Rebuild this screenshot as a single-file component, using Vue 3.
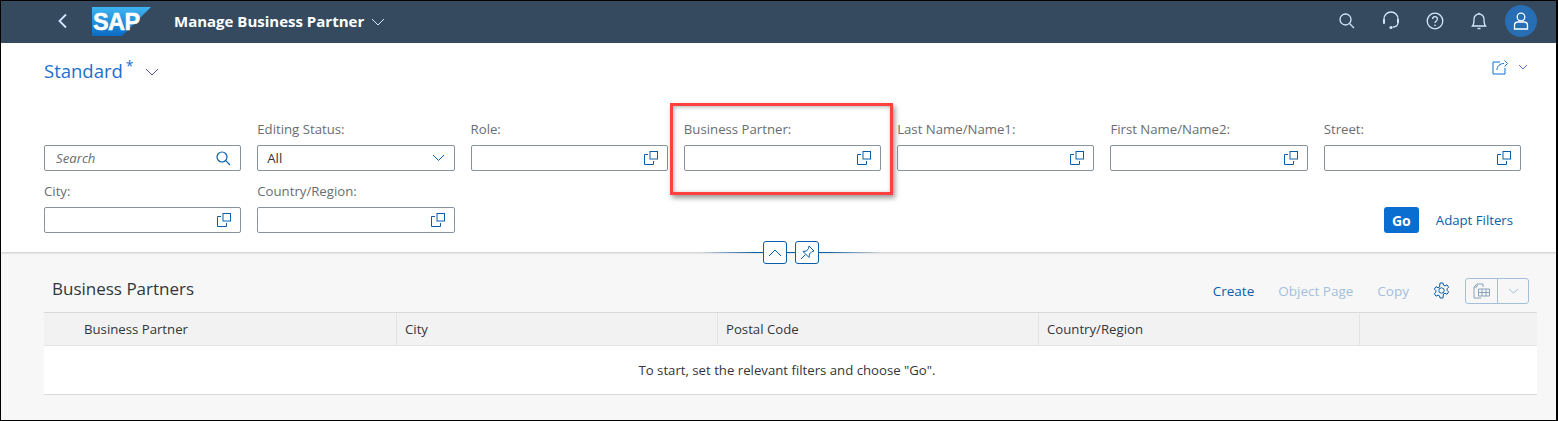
<script setup>
const filters = [
  { label: "Role:" },
  { label: "Business Partner:", marked: true },
  { label: "Last Name/Name1:" },
  { label: "First Name/Name2:" },
  { label: "Street:" },
  { label: "City:" },
  { label: "Country/Region:" },
];
const columns = ["Business Partner", "City", "Postal Code", "Country/Region", ""];
</script>

<template>
  <div class="page">
    <header class="shell">
      <div class="shell-left">
        <svg class="back" width="12" height="16" viewBox="0 0 12 16"><path d="M9 1.500 2.500 8 9 14.500" /></svg>
        <svg class="logo" width="60" height="30" viewBox="0 0 60 30">
          <defs>
            <linearGradient id="sapblue" x1="0" y1="0" x2="0" y2="1">
              <stop offset="0" stop-color="#3fb4f0" />
              <stop offset="1" stop-color="#0a6cc4" />
            </linearGradient>
          </defs>
          <polygon points="0,0 59,0 30,29 0,29" fill="url(#sapblue)" />
          <text x="1" y="23" class="logo-text">SAP</text>
        </svg>
        <span class="app-title">Manage Business Partner</span>
        <svg class="chev light" width="14" height="8" viewBox="0 0 14 8"><path d="M1 1l6 6 6-6" /></svg>
      </div>
      <div class="shell-right">
        <svg width="18" height="18" viewBox="0 0 18 18"><circle cx="7.500" cy="7.500" r="5.500" /><path d="M11.500 11.500 16 16" /></svg>
        <svg width="18" height="20" viewBox="0 0 18 20"><path d="M2 10V8a7 7 0 0 1 14 0v3c0 3-2 5-5 5" /><rect x="1" y="8" width="2" height="5" rx="1" class="fill" /><rect x="15" y="8" width="2" height="4" rx="1" class="fill" /><circle cx="9" cy="16.500" r="1.600" class="fill" /></svg>
        <svg width="18" height="18" viewBox="0 0 18 18"><circle cx="9" cy="9" r="7.800" /><path d="M6.600 7a2.400 2.400 0 1 1 3.700 2c-.9.6-1.300 1-1.300 2" /><circle cx="9" cy="13.400" r=".8" class="fill" /></svg>
        <svg width="18" height="18" viewBox="0 0 18 18"><path d="M2.500 14c1.300-1.500 1.500-3 1.500-7a5 5 0 0 1 10 0c0 4 .2 5.500 1.500 7z" /><path d="M7.500 16.500h3" /><path d="M9 2V.8" /></svg>
        <span class="avatar">
          <svg width="16" height="18" viewBox="0 0 16 18"><circle cx="8" cy="5" r="3.800" /><path d="M1.500 17v-3.500c0-2 1.500-3.500 3.500-3.500h6c2 0 3.500 1.500 3.500 3.500V17z" /></svg>
        </span>
      </div>
    </header>

    <section class="filterbar">
      <div class="variant-row">
        <span class="variant">Standard</span>
        <span class="star">*</span>
        <svg class="chev dark" width="14" height="8" viewBox="0 0 14 8"><path d="M1 1l6 6 6-6" /></svg>
        <span class="spacer"></span>
        <svg class="share" width="17" height="16" viewBox="0 0 17 16"><path d="M8 3H1v12h12V9" /><path d="M5 11c0-4 3-6.500 7-6.500M12.500 1.500l3 3-3 3" /></svg>
        <svg class="chev small" width="10" height="6" viewBox="0 0 10 6"><path d="M1 1l4 4 4-4" /></svg>
      </div>

      <div class="filter-grid">
        <div class="field">
          <label></label>
          <div class="input">
            <span class="placeholder">Search</span>
            <svg class="search" width="15" height="15" viewBox="0 0 15 15"><circle cx="6" cy="6" r="5" /><path d="M9.700 9.700 14 14" /></svg>
          </div>
        </div>
        <div class="field">
          <label>Editing Status:</label>
          <div class="input">
            <span class="value">All</span>
            <svg class="chev dark" width="13" height="8" viewBox="0 0 13 8"><path d="M1 1l5.500 5.500L12 1" /></svg>
          </div>
        </div>
        <div v-for="f in filters" :key="f.label" class="field" :class="{ marked: f.marked }">
          <label>{{ f.label }}</label>
          <div class="input">
            <span></span>
            <svg class="vh" width="14" height="14" viewBox="0 0 14 14"><path d="M4 3.500H.5v10h9V10" /><rect x="6" y=".5" width="7.500" height="7.500" /></svg>
          </div>
          <div v-if="f.marked" class="highlight"></div>
        </div>
        <div class="actions">
          <button class="go">Go</button>
          <span class="adapt">Adapt Filters</span>
        </div>
      </div>

      <div class="collapse">
        <span class="round-btn">
          <svg width="14" height="8" viewBox="0 0 14 8"><path d="M1 7l6-6 6 6" /></svg>
        </span>
        <span class="round-btn">
          <svg width="15" height="15" viewBox="0 0 15 15"><path d="M9 1l5 5-2 .5-2.500 2.500-.5 3.500L3 6.500l3.500-.5L8.500 3.500zM5.500 9.500 1 14" /></svg>
        </span>
      </div>
    </section>

    <section class="content">
      <div class="table-head">
        <h2>Business Partners</h2>
        <div class="toolbar">
          <span class="tool">Create</span>
          <span class="tool off">Object Page</span>
          <span class="tool off">Copy</span>
          <svg class="gear" width="17" height="17" viewBox="0 0 17 17"><circle cx="8.500" cy="8.500" r="2.700" /><path d="M7 1h3l.5 2.200 1.500.7 2-1.100 1.600 2.400-1.500 1.600v1.500l1.500 1.600-1.600 2.400-2-1.100-1.500.7L10 16H7l-.5-2.200-1.500-.7-2 1.100-1.600-2.400L2.900 10.200V8.700L1.400 7.100 3 4.700l2 1.100 1.500-.7z" /></svg>
          <div class="export">
            <span class="exp-main">
              <svg width="17" height="16" viewBox="0 0 17 16"><path d="M8 15H1V4l3-3h6v3" /><path d="M4 1v3H1" /><path d="M5.500 6h11v7h-11zM5.500 9.500h11M9 6v7M13 6v7" /></svg>
            </span>
            <span class="exp-arrow">
              <svg width="11" height="6" viewBox="0 0 11 6"><path d="M1 1l4.500 4L10 1" /></svg>
            </span>
          </div>
        </div>
      </div>
      <div class="table">
        <div class="thead">
          <div v-for="c in columns" :key="c" class="th">{{ c }}</div>
        </div>
        <div class="empty">To start, set the relevant filters and choose "Go".</div>
      </div>
    </section>
  </div>
</template>

<style>
html, body {
  margin: 0;
  background: #f7f7f7;
}
</style>

<style scoped>
.page {
  box-sizing: border-box;
  width: 1558px;
  height: 421px;
  border: 1px solid #000;
  border-right-width: 2px;
  display: flex;
  flex-direction: column;
  font-family: "Open Sans", "Noto Sans", sans-serif;
  font-size: 13.2px;
  color: #32363a;
  overflow: hidden;
  background: #f7f7f7;
}
svg {
  fill: none;
  stroke-width: 1;
  display: block;
  flex: none;
}

.shell {
  height: 42px;
  box-sizing: border-box;
  flex: none;
  background: #354a5f;
  display: flex;
  align-items: center;
  justify-content: space-between;
  padding: 0 19px 2px 0;
}
.shell-left {
  display: flex;
  align-items: center;
}
.back {
  margin-left: 56px;
  stroke: #d1e8ff;
  stroke-width: 1.800;
}
.logo {
  margin-left: 23px;
  margin-top: 2px;
}
.logo-text {
  fill: #fff;
  stroke: #fff;
  stroke-width: .5;
  font-family: "Liberation Sans", sans-serif;
  font-weight: 700;
  font-size: 23.500px;
  letter-spacing: -.6px;
}
.app-title {
  margin-left: 22px;
  color: #fff;
  font-weight: 700;
  font-size: 15px;
}
.chev.light {
  margin-left: 7px;
  margin-top: 2px;
  stroke: #d1e8ff;
}
.shell-right {
  display: flex;
  align-items: center;
  gap: 26px;
}
.shell-right > svg {
  stroke: #d1e8ff;
  stroke-width: 1.300;
}
.shell-right .fill {
  fill: #d1e8ff;
  stroke: none;
}
.avatar {
  width: 32px;
  height: 32px;
  margin-left: -9px;
  border-radius: 50%;
  background: #286eb4;
  display: flex;
  align-items: center;
  justify-content: center;
}
.avatar svg {
  stroke: #fff;
  stroke-width: 1.300;
}

.filterbar {
  position: relative;
  height: 209px;
  flex: none;
  background: #fff;
  box-shadow: 0 1px 2px rgba(0, 0, 0, .2);
  padding: 0 35px 0 43px;
  box-sizing: border-box;
  z-index: 1;
}
.variant-row {
  display: flex;
  align-items: center;
  height: 54px;
}
.variant {
  font-size: 18.500px;
  color: #1a6fd0;
}
.star {
  font-size: 14px;
  line-height: 1;
  color: #1a6fd0;
  margin: -8px 0 0 3px;
}
.chev.dark {
  stroke: #0a5ea8;
}
.variant-row .chev.dark {
  margin-left: 11px;
  margin-top: 4px;
  stroke: #5b4f9e;
}
.spacer {
  flex: 1;
}
.share {
  stroke: #0a6ed1;
  margin-top: -7px;
}
.chev.small {
  stroke: #5b6fc0;
  margin: -7px -7px 0 9px;
}
.filter-grid {
  display: grid;
  grid-template-columns: repeat(7, 1fr);
  column-gap: 16px;
  row-gap: 7px;
  margin-top: 19px;
}
.field {
  position: relative;
  min-width: 0;
}
.field label {
  display: block;
  height: 29px;
  line-height: 26px;
  color: #6a6d70;
}
.input {
  box-sizing: border-box;
  height: 26px;
  border: 1px solid #89919a;
  border-radius: 2px;
  display: flex;
  align-items: center;
  justify-content: space-between;
  padding: 0 9px 0 10px;
}
.placeholder {
  font-style: italic;
  color: #6a6d70;
  margin-left: 1px;
}
.value {
  color: #32363a;
  margin-left: -1px;
}
.search {
  stroke: #0a5ea8;
  stroke-width: 1.200;
}
.vh {
  stroke: #0a5ea8;
}
.highlight {
  position: absolute;
  left: -14px;
  right: -12px;
  top: -13px;
  bottom: -24px;
  border: 3px solid #ff4040;
  box-shadow: 2px 3px 5px rgba(0, 0, 0, .4), inset 1px 1px 4px rgba(0, 0, 0, .3);
  pointer-events: none;
}
.actions {
  grid-column: 3 / 8;
  display: flex;
  justify-content: flex-end;
  align-items: flex-end;
  gap: 17px;
  padding-right: 8px;
}
.go {
  width: 35px;
  height: 26px;
  border: 0;
  border-radius: 3px;
  background: #0a6ed1;
  color: #fff;
  font-family: inherit;
  font-weight: 700;
  font-size: 14px;
  padding: 0;
}
.adapt {
  color: #0a5ea8;
  line-height: 26px;
}
.collapse {
  position: absolute;
  left: 700px;
  width: 180px;
  top: 198px;
  height: 23px;
  display: flex;
  justify-content: center;
  align-items: center;
  gap: 8px;
  background: linear-gradient(to right, transparent, #0a5ea8 30%, #0a5ea8 70%, transparent) center / 100% 1px no-repeat;
}
.round-btn {
  box-sizing: border-box;
  width: 24px;
  height: 23px;
  border: 1px solid #0a5ea8;
  border-radius: 3px;
  background: #fff;
  display: flex;
  align-items: center;
  justify-content: center;
}
.round-btn svg {
  stroke: #0a5ea8;
}

.content {
  flex: 1;
  padding: 0 19px 0 43px;
}
.table-head {
  height: 60px;
  display: flex;
  align-items: center;
  justify-content: space-between;
  padding: 17px 8px 0 8px;
  box-sizing: border-box;
}
h2 {
  margin: -4px 0 0;
  font-weight: 400;
  font-size: 17px;
  color: #32363a;
}
.toolbar {
  display: flex;
  align-items: center;
}
.tool {
  color: #0a5ea8;
  font-size: 13.500px;
  margin-right: 24px;
}
.tool.off {
  color: #a3bfdc;
}
.gear {
  stroke: #0a5ea8;
  margin-right: 15px;
}
.export {
  box-sizing: border-box;
  width: 64px;
  height: 26px;
  border: 1px solid #a3bfdc;
  border-radius: 3px;
  display: flex;
}
.exp-main {
  width: 31px;
  border-right: 1px solid #a3bfdc;
  display: flex;
  align-items: center;
  justify-content: center;
}
.exp-main svg {
  stroke: #8aa3bb;
}
.exp-arrow {
  flex: 1;
  display: flex;
  align-items: center;
  justify-content: center;
}
.exp-arrow svg {
  stroke: #a3bfdc;
}
.table {
  background: #fff;
  border-bottom: 1px solid #d9d9d9;
}
.thead {
  display: grid;
  grid-template-columns: 353px 321px 321px 321px 1fr;
  height: 34px;
  box-sizing: border-box;
  background: #f2f2f2;
  border-top: 1px solid #d9d9d9;
  border-bottom: 1px solid #e4e4e4;
}
.th {
  border-right: 1px solid #e4e4e4;
  padding-left: 8px;
  line-height: 32px;
}
.th:first-child {
  padding-left: 40px;
}
.th:last-child {
  border-right: 0;
}
.empty {
  height: 48px;
  line-height: 48px;
  text-align: center;
  padding-right: 7px;
}
</style>
